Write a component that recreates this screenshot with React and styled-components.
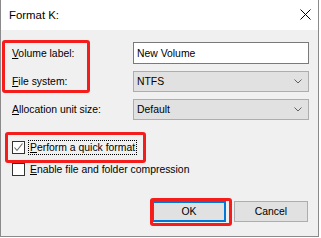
import React from "react";
import styled, { createGlobalStyle } from "styled-components";

const Global = createGlobalStyle`
  html, body { margin: 0; padding: 0; background: #ffffff; }
  body { font-family: "Liberation Sans", Arial, sans-serif; color: #000; }
`;

const Window = styled.div`
  position: relative;
  box-sizing: border-box;
  width: 319px;
  height: 237px;
  border: 1px solid #8a8a8a;
  border-top: none;
  display: flex;
  flex-direction: column;
  background: #f0f0f0;
`;

const TitleBar = styled.div`
  height: 30px;
  flex: none;
  background: #ffffff;
  display: flex;
  align-items: center;
  justify-content: space-between;
  padding: 0 7px 0 8px;
  font-size: 11.4px;
`;

const CloseBtn = styled.svg`
  width: 11px;
  height: 11px;
  margin-top: -2px;
`;

const Body = styled.div`
  flex: 1;
  padding: 12px 9px 0 11px;
  display: flex;
  flex-direction: column;
  font-size: 10.4px;
`;

const Form = styled.div`
  display: grid;
  grid-template-columns: 121px 1fr;
  grid-template-rows: 22px 21px 21px;
  row-gap: 7px;
  align-items: center;
`;

const Label = styled.span`
  white-space: nowrap;
`;

const Key = styled.span`
  text-decoration: underline;
  text-underline-offset: 1px;
`;

const TextInput = styled.div`
  box-sizing: border-box;
  height: 22px;
  background: #fff;
  border: 1px solid #7a7a7a;
  display: flex;
  align-items: center;
  padding-left: 3px;
`;

const Select = styled.div`
  box-sizing: border-box;
  height: 21px;
  background: #e1e1e1;
  border: 1px solid #adadad;
  display: flex;
  align-items: center;
  justify-content: space-between;
  padding: 0 6px 0 3px;
`;

const Chevron = styled.svg`
  width: 8px;
  height: 5px;
`;

const Checks = styled.div`
  margin-top: 19px;
  display: flex;
  flex-direction: column;
  gap: 6px;
`;

const CheckRow = styled.div`
  height: 16px;
  display: flex;
  align-items: center;
  gap: 3px;
`;

const Box = styled.span`
  box-sizing: border-box;
  width: 13px;
  height: 13px;
  background: #fff;
  border: 1px solid #333;
  display: flex;
  align-items: center;
  justify-content: center;
`;

const CheckText = styled.span`
  white-space: nowrap;
  padding: 1px 1px;
  border: 1px dotted ${(p) => (p.$focus ? "#000" : "transparent")};
`;

const Buttons = styled.div`
  margin-top: 24px;
  margin-right: 1px;
  display: flex;
  justify-content: flex-end;
  gap: 8px;
`;

const Button = styled.div`
  box-sizing: border-box;
  width: 74px;
  height: 21px;
  background: #e1e1e1;
  border: ${(p) => (p.$default ? "2px solid #0078d7" : "1px solid #adadad")};
  display: flex;
  align-items: center;
  justify-content: center;
  font-size: 10.4px;
`;

const Highlight = styled.div`
  position: absolute;
  box-sizing: border-box;
  left: ${(p) => p.$x}px;
  top: ${(p) => p.$y}px;
  width: ${(p) => p.$w}px;
  height: ${(p) => p.$h}px;
  border: 3px solid #f51c1c;
  border-radius: 3px;
  pointer-events: none;
`;

const ChevronIcon = () => (
  <Chevron viewBox="0 0 8 5">
    <path d="M0.5 0.5 L4 4 L7.5 0.5" fill="none" stroke="#606060" strokeWidth="1" />
  </Chevron>
);

export default function App() {
  return (
    <>
      <Global />
      <Window>
        <TitleBar>
          <span>Format K:</span>
          <CloseBtn viewBox="0 0 11 11">
            <path d="M0.5 0.5 L10.5 10.5 M10.5 0.5 L0.5 10.5" stroke="#000" strokeWidth="1" fill="none" />
          </CloseBtn>
        </TitleBar>
        <Body>
          <Form>
            <Label><Key>V</Key>olume label:</Label>
            <TextInput>New Volume</TextInput>
            <Label><Key>F</Key>ile system:</Label>
            <Select>
              <span>NTFS</span>
              <ChevronIcon />
            </Select>
            <Label><Key>A</Key>llocation unit size:</Label>
            <Select>
              <span>Default</span>
              <ChevronIcon />
            </Select>
          </Form>
          <Checks>
            <CheckRow>
              <Box>
                <svg width="11" height="11" viewBox="0 0 11 11">
                  <path d="M1.5 5.5 L4 8.5 L9.5 1.5" fill="none" stroke="#666" strokeWidth="1.1" />
                </svg>
              </Box>
              <CheckText $focus><Key>P</Key>erform a quick format</CheckText>
            </CheckRow>
            <CheckRow>
              <Box />
              <CheckText><Key>E</Key>nable file and folder compression</CheckText>
            </CheckRow>
          </Checks>
          <Buttons>
            <Button $default>OK</Button>
            <Button>Cancel</Button>
          </Buttons>
        </Body>
        <Highlight $x={1} $y={40} $w={88} $h={53} />
        <Highlight $x={4} $y={132} $w={141} $h={31} />
        <Highlight $x={149} $y={198} $w={82} $h={28} />
      </Window>
    </>
  );
}
